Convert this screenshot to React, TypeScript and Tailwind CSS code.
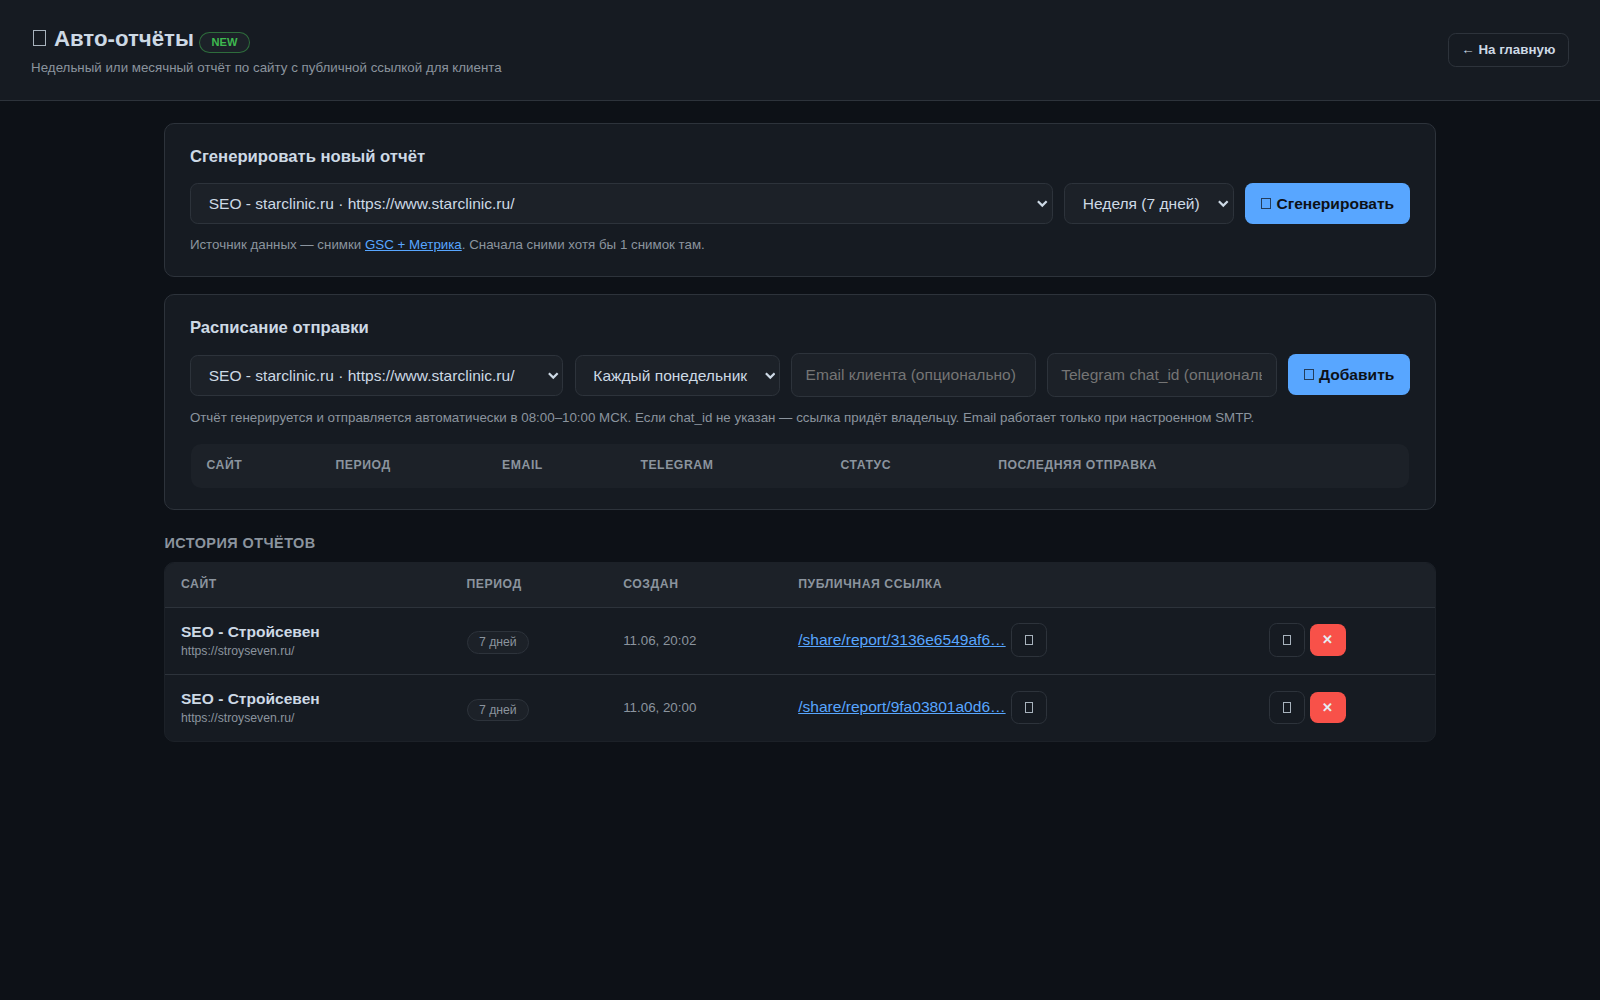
import type { ReactNode } from "react";
import clsx from "clsx";

const sites = ["SEO - starclinic.ru · https://www.starclinic.ru/"];

const reports = [
  { site: "SEO - Стройсевен", url: "https://stroyseven.ru/", period: "7 дней", created: "11.06, 20:02", link: "/share/report/3136e6549af6…" },
  { site: "SEO - Стройсевен", url: "https://stroyseven.ru/", period: "7 дней", created: "11.06, 20:00", link: "/share/report/9fa03801a0d6…" },
];

// Hollow box glyph, sized by the text around it
const Box = ({ className }: { className?: string }) => (
  <span className={clsx("inline-block border border-current", className ?? "mr-[0.07em] ml-[0.09em] h-[0.7em] w-[0.62em] opacity-70")} />
);

const Select = ({ options, className }: { options: string[]; className: string }) => (
  <div className={clsx("relative", className)}>
    <select className="block h-[36.5px] w-full appearance-none rounded-[7px] border border-[#2d333b] bg-[#1c2128] pr-4 pl-[16px] text-[14px] text-[#cdd9e5]">
      {options.map((o) => (
        <option key={o}>{o}</option>
      ))}
    </select>
    <svg
      className="pointer-events-none absolute top-[15px] right-[4.5px] h-[7px] w-[9.5px] text-[#cdd9e5]"
      viewBox="0 0 9.5 7"
      fill="none"
      stroke="currentColor"
      strokeWidth="2"
    >
      <path d="M0.8 1.2 L4.75 5.1 L8.7 1.2" />
    </svg>
  </div>
);

const Input = ({ placeholder, className }: { placeholder: string; className: string }) => (
  <input
    placeholder={placeholder}
    className={clsx(
      "h-[39px] rounded-[7px] border border-[#2d333b] bg-[#1c2128] px-3 text-[14px] text-[#cdd9e5] placeholder:text-[#757575]",
      className
    )}
  />
);

const PrimaryButton = ({ children, className }: { children: ReactNode; className: string }) => (
  <button className={clsx("h-[37px] shrink-0 rounded-[7px] bg-[#58a6ff] pr-px text-center text-[14px] font-bold whitespace-nowrap text-[#0d1117]", className)}>
    {children}
  </button>
);

const IconButton = () => (
  <button className="flex h-[30px] w-[33px] items-center justify-center rounded-[7px] border border-[#2d333b] text-[#cdd9e5]">
    <Box className="h-[9.5px] w-[7.5px] opacity-80" />
  </button>
);

const Th = ({ children, className }: { children?: ReactNode; className?: string }) => (
  <th className={clsx("bg-[#1c2128] px-[14px] text-left text-[11px] font-bold tracking-[0.5px] text-[#8b949e] uppercase", className)}>
    {children}
  </th>
);

const Header = () => (
  <header className="flex h-[91px] items-center justify-between border-b border-[#2d333b] bg-[#161b22] px-7">
    <div>
      <h1 className="flex h-[30px] items-center text-[20px] font-bold">
        <span>
          <Box className="mr-[1.5px] ml-[2px] h-[14px] w-[11.5px] opacity-80" /> Авто-отчёты
        </span>
        <span className="mt-[7.5px] ml-[5px] flex h-[19px] items-center rounded-full border border-[#3fb950]/50 bg-[#1c2128] px-[10px] text-[10px] text-[#3fb950]">
          NEW
        </span>
      </h1>
      <p className="mt-[3.2px] text-[12px] leading-[18px] text-[#8b949e]">
        Недельный или месячный отчёт по сайту с публичной ссылкой для клиента
      </p>
    </div>
    <button className="h-[30px] w-[109px] rounded-[7px] border border-[#2d333b] text-[12px] font-bold">← На главную</button>
  </header>
);

const GenerateCard = () => (
  <section className="h-[138px] rounded-[9px] border border-[#2d333b] bg-[#161b22] px-[22px] pt-[21px]">
    <h2 className="text-[15px] leading-[17px] font-bold">Сгенерировать новый отчёт</h2>
    <div className="mt-[15px] flex items-start gap-[10px]">
      <Select className="min-w-0 flex-1" options={sites} />
      <Select className="w-[153px]" options={["Неделя (7 дней)", "Месяц (30 дней)"]} />
      <PrimaryButton className="w-[148.5px]">
        <Box /> Сгенерировать
      </PrimaryButton>
    </div>
    <p className="mt-[10px] text-[12px] leading-[18px] text-[#8b949e]">
      Источник данных — снимки{" "}
      <a className="text-[#58a6ff] underline" href="#">GSC + Метрика</a>. Сначала сними хотя бы 1 снимок там.
    </p>
  </section>
);

const ScheduleCard = () => (
  <section className="mt-4 h-[194px] rounded-[9px] border border-[#2d333b] bg-[#161b22] px-[22px] pt-[21px]">
    <h2 className="text-[15px] leading-[17px] font-bold">Расписание отправки</h2>
    <div className="mt-[14px] flex items-center gap-[10px]">
      <Select className="mt-[1px] min-w-0 flex-1" options={sites} />
      <Select className="mt-[1px] w-[185px]" options={["Каждый понедельник", "Каждое 1-е число"]} />
      <Input className="w-[220px]" placeholder="Email клиента (опционально)" />
      <Input className="w-[207px]" placeholder="Telegram chat_id (опционально)" />
      <PrimaryButton className="w-[110px]">
        <Box /> Добавить
      </PrimaryButton>
    </div>
    <p className="mt-[10px] text-[12px] leading-[18px] text-[#8b949e]">
      Отчёт генерируется и отправляется автоматически в 08:00–10:00 МСК. Если chat_id не указан — ссылка придёт
      владельцу. Email работает только при настроенном SMTP.
    </p>
    <div className="mx-px mt-[15px] overflow-hidden rounded-[9px]">
      <table className="w-full table-fixed">
        <thead>
          <tr className="h-[39px]">
            <Th className="w-[116px] pb-[2px]">Сайт</Th>
            <Th className="w-[150px] pb-[2px]">Период</Th>
            <Th className="w-[124.5px] pb-[2px]">Email</Th>
            <Th className="w-[180px] pb-[2px]">Telegram</Th>
            <Th className="w-[142px] pb-[2px]">Статус</Th>
            <Th className="pb-[2px]">Последняя отправка</Th>
          </tr>
        </thead>
      </table>
    </div>
  </section>
);

const History = () => (
  <section className="mt-[19.5px]">
    <h2 className="text-[13px] leading-[20px] font-bold tracking-[0.4px] text-[#8b949e] uppercase">История отчётов</h2>
    <div className="mt-[7px] overflow-hidden rounded-[9px] border border-[#1c2128] bg-[#161b22]">
      <table className="w-full table-fixed">
        <thead>
          <tr className="h-[40px]">
            <Th className="w-[257px]">Сайт</Th>
            <Th className="w-[141px]">Период</Th>
            <Th className="w-[157.5px]">Создан</Th>
            <Th className="w-[423.5px]">Публичная ссылка</Th>
            <Th />
          </tr>
        </thead>
        <tbody>
          {reports.map((r) => (
            <tr key={r.link} className="h-[60.5px] border-t border-[#2d333b]">
              <td className="px-[14px] pt-px">
                <div className="text-[14px] leading-[18px] font-bold">{r.site}</div>
                <div className="text-[11px] leading-[17px] text-[#8b949e]">{r.url}</div>
              </td>
              <td className="px-[14px]">
                <span className="inline-flex h-[20px] items-center rounded-full border border-[#2d333b] bg-[#1c2128] px-[10.3px] text-[11px] text-[#8b949e]">
                  {r.period}
                </span>
              </td>
              <td className="px-[14px] text-[12px] text-[#8b949e]">{r.created}</td>
              <td className="px-[14px] pb-px">
                <div className="flex items-center gap-[4.5px]">
                  <a className="-mt-[1.5px] text-[14px] text-[#58a6ff] underline" href="#">{r.link}</a>
                  <IconButton />
                </div>
              </td>
              <td className="px-[14px] pb-px">
                <div className="flex items-center gap-[4px]">
                  <IconButton />
                  <button className="h-[28.5px] w-[32.5px] rounded-[7px] bg-[#f85149] text-[12px] font-bold text-[#e6edf3]">✕</button>
                </div>
              </td>
            </tr>
          ))}
        </tbody>
      </table>
    </div>
  </section>
);

const App = () => (
  <div className="h-[900px] w-[1440px] overflow-hidden bg-[#0d1117] font-['Liberation_Sans',sans-serif] text-[#cdd9e5] [zoom:1.11111]">
    <Header />
    <main className="mx-auto max-w-[1200px] px-7 pt-5">
      <GenerateCard />
      <ScheduleCard />
      <History />
    </main>
  </div>
);

export default App;
